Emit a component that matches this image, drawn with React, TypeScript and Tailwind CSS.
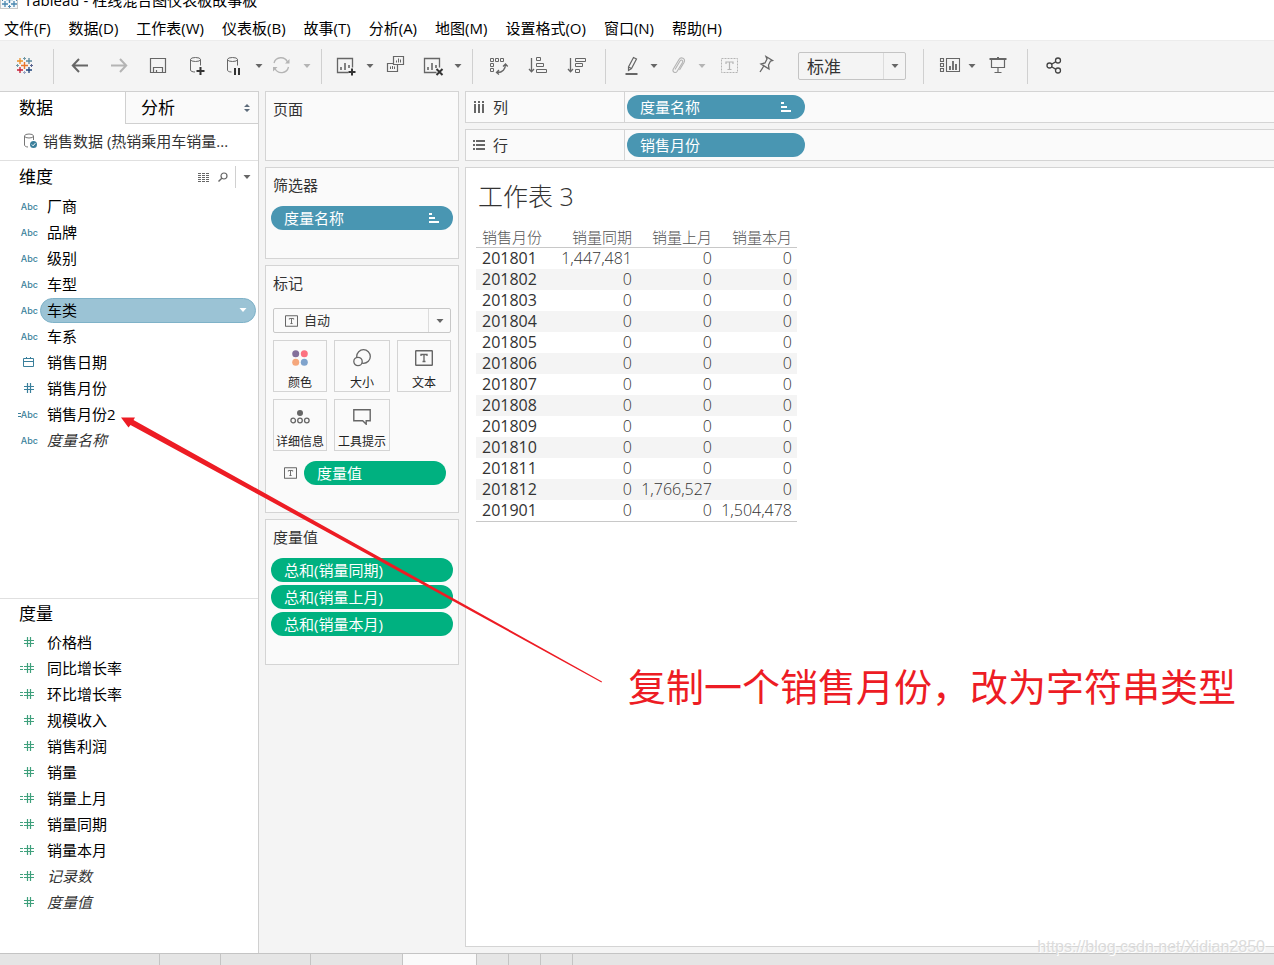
import type { ReactNode } from 'react'
import clsx from 'clsx'

type FieldKind = 'text' | 'calcText' | 'date' | 'number' | 'calcNumber'

type Field = {
  name: string
  kind: FieldKind
  selected?: boolean
  generated?: boolean
}

const MENUS = [
  '文件(F)',
  '数据(D)',
  '工作表(W)',
  '仪表板(B)',
  '故事(T)',
  '分析(A)',
  '地图(M)',
  '设置格式(O)',
  '窗口(N)',
  '帮助(H)',
]

const DIMENSIONS: Field[] = [
  { name: '厂商', kind: 'text' },
  { name: '品牌', kind: 'text' },
  { name: '级别', kind: 'text' },
  { name: '车型', kind: 'text' },
  { name: '车类', kind: 'text', selected: true },
  { name: '车系', kind: 'text' },
  { name: '销售日期', kind: 'date' },
  { name: '销售月份', kind: 'number' },
  { name: '销售月份2', kind: 'calcText' },
  { name: '度量名称', kind: 'text', generated: true },
]

const MEASURES: Field[] = [
  { name: '价格档', kind: 'number' },
  { name: '同比增长率', kind: 'calcNumber' },
  { name: '环比增长率', kind: 'calcNumber' },
  { name: '规模收入', kind: 'number' },
  { name: '销售利润', kind: 'number' },
  { name: '销量', kind: 'number' },
  { name: '销量上月', kind: 'calcNumber' },
  { name: '销量同期', kind: 'calcNumber' },
  { name: '销量本月', kind: 'calcNumber' },
  { name: '记录数', kind: 'calcNumber', generated: true },
  { name: '度量值', kind: 'number', generated: true },
]

const ROWS = [
  ['201801', '1,447,481', '0', '0'],
  ['201802', '0', '0', '0'],
  ['201803', '0', '0', '0'],
  ['201804', '0', '0', '0'],
  ['201805', '0', '0', '0'],
  ['201806', '0', '0', '0'],
  ['201807', '0', '0', '0'],
  ['201808', '0', '0', '0'],
  ['201809', '0', '0', '0'],
  ['201810', '0', '0', '0'],
  ['201811', '0', '0', '0'],
  ['201812', '0', '1,766,527', '0'],
  ['201901', '0', '0', '1,504,478'],
]

/* ---------- icons ---------- */

function Icon({ children, className }: { children: ReactNode; className?: string }) {
  return (
    <svg viewBox="0 0 24 24" fill="none" stroke="currentColor" className={clsx('size-6 shrink-0', className)}>
      {children}
    </svg>
  )
}

function Caret({ className }: { className?: string }) {
  return (
    <svg viewBox="0 0 8 8" fill="currentColor" className={clsx('size-2 shrink-0', className)}>
      <path d="M0.5 2h7L4 6z" />
    </svg>
  )
}

// x, y, arm length, stroke width, colour
const LOGO_MARKS: [number, number, number, number, string][] = [
  [12.5, 11.5, 3.5, 1.4, '#e8762c'],
  [8, 7, 3, 1.3, '#eb9129'],
  [17, 7, 3, 1.3, '#59879b'],
  [8, 16, 3, 1.3, '#c72037'],
  [17, 16, 3, 1.3, '#1f457e'],
  [12.5, 4.5, 1.5, 1, '#7099a6'],
  [12.5, 18.5, 1.5, 1, '#9aa4c4'],
  [5.5, 11.5, 1.5, 1, '#7099a6'],
  [19.5, 11.5, 1.5, 1, '#5b6591'],
]

function LogoIcon({ mono, className }: { mono?: boolean; className?: string }) {
  return (
    <Icon className={className}>
      {LOGO_MARKS.map(([x, y, r, width, color]) => (
        <path
          key={`${x}-${y}`}
          d={`M${x - r} ${y}h${r * 2}M${x} ${y - r}v${r * 2}`}
          stroke={mono ? '#4a86b0' : color}
          strokeWidth={width}
        />
      ))}
    </Icon>
  )
}

const BackIcon = () => (
  <Icon>
    <path d="M20 11.5H5M11 5L4.8 11.5L11 18" strokeWidth="2" />
  </Icon>
)

const ForwardIcon = () => (
  <Icon>
    <path d="M4 11.5h15M13 5l6.2 6.500L13 18" strokeWidth="2" />
  </Icon>
)

const SaveIcon = () => (
  <Icon>
    <path d="M4.500 4.500h15v14h-15zM7.500 18.500v-5h9v5M10.500 18.500v-2.500" strokeWidth="1.200" />
  </Icon>
)

const AddDataIcon = () => (
  <Icon>
    <ellipse cx="10.5" cy="5.5" rx="5" ry="2" />
    <path d="M5.5 5.500v10.500c0 1.200 2 2 4.500 2M15.500 5.500v6" />
    <path d="M11.500 17h8M15.500 13v8" stroke="#333" strokeWidth="2" />
  </Icon>
)

const PauseDataIcon = () => (
  <Icon>
    <ellipse cx="9.5" cy="5.5" rx="5" ry="2" />
    <path d="M4.500 5.500v10.500c0 1.200 1.500 2 4 2M14.500 5.500v6" />
    <path d="M12 14v7M16 14v7" stroke="#333" strokeWidth="2" />
  </Icon>
)

const RefreshIcon = () => (
  <Icon>
    <path d="M5 9a7.2 7.2 0 0 1 13.500-1M19.500 13a7.200 7.200 0 0 1-13.500 1.500" strokeWidth="1.300" />
    <path d="M20.500 5v4.500H16zM4 17.500V13h4.500z" fill="currentColor" stroke="none" />
  </Icon>
)

const NewSheetIcon = () => (
  <Icon>
    <path d="M14.500 18.500h-11v-14h15v9" strokeWidth="1.300" />
    <path d="M7 16v-3M11 16V9M15 14v-3" strokeWidth="1.600" />
    <path d="M14.500 18h7M18 14.500v7" stroke="#333" strokeWidth="2" />
  </Icon>
)

const DuplicateIcon = () => (
  <Icon>
    <path d="M9.500 2.500h10v8h-10zM9.500 9.500h-6v8h10v-7" strokeWidth="1.200" />
    <path d="M12.500 8.500v-2M14.500 8.500v-4M16.500 8.500v-3M6.500 15v-2.500M8.500 15v-3M10.500 15v-2.500" />
  </Icon>
)

const ClearSheetIcon = () => (
  <Icon>
    <path d="M14.500 18.500h-12v-14h15v9" strokeWidth="1.300" />
    <path d="M6 16v-3M10 16V9M14 14v-3" strokeWidth="1.600" />
    <path d="M14.500 15l6 6M20.500 15l-6 6" stroke="#333" strokeWidth="2" />
  </Icon>
)

const SwapIcon = () => (
  <Icon>
    <path d="M3.500 4.500h3v3h-3zM8.500 4.500h3v3h-3zM13.500 4.500h3v3h-3zM3.500 9.500h3v3h-3zM3.500 14.500h3v3h-3z" />
    <path d="M10.500 18.500c5 0 8-3.500 8-8M16 12.500l2.500-2.500 2.200 2.500M12 16l-2.500 2.500 2.500 2" strokeWidth="1.300" />
  </Icon>
)

const SortAscIcon = () => (
  <Icon>
    <path d="M5.500 4v13.500M3 15l2.500 2.700L8 15" strokeWidth="1.300" />
    <path d="M10.500 3.500h4v3h-4zM10.500 9.500h7v3h-7zM10.500 15.500h10v3h-10z" />
  </Icon>
)

const SortDescIcon = () => (
  <Icon>
    <path d="M5.500 4v13.500M3 15l2.500 2.700L8 15" strokeWidth="1.300" />
    <path d="M10.500 4.500h10v3h-10zM10.500 9.500h7v3h-7zM10.500 15.500h4v3h-4z" />
  </Icon>
)

const HighlightIcon = () => (
  <Icon>
    <path d="M13.500 3.500l3 1.500-5 9.500-3 2v-3.500zM8.500 13l3 1.500" strokeWidth="1.200" />
    <path d="M5.500 20h12" strokeWidth="2" />
  </Icon>
)

const ClipIcon = () => (
  <Icon>
    <path
      d="M9 15.500l5-8.500c1.200-2 3.500-.5 2.500 1.500l-5.500 9c-1.500 2.200-5 .3-3.800-2.200L13 5.500c2-3.300 7-1 5 3l-4.500 7.500"
      strokeWidth="1.100"
    />
  </Icon>
)

const LabelIcon = () => (
  <Icon>
    <path d="M3.500 4.500h16v14h-16z" strokeDasharray="2 1" />
    <path d="M8 10V8h7v2M11.500 8v7.500M9.500 15.500h4" strokeWidth="1.200" />
  </Icon>
)

const PinIcon = () => (
  <Icon>
    <path d="M12 2.500l6.500 4-2 .5-2 4 .5 4-8-5 4-1 2-4zM9.500 12.500L6 18" strokeWidth="1.300" />
  </Icon>
)

const ShowMeIcon = () => (
  <Icon>
    <path d="M2.500 4.500h3v3h-3zM2.500 9.500h3v3h-3zM2.500 14.500h3v3h-3zM8.500 4.500h13v13h-13z" strokeWidth="1.100" />
    <path d="M12 16v-4M15 16V7M18 16v-6" strokeWidth="1.800" />
  </Icon>
)

const PresentIcon = () => (
  <Icon>
    <path d="M3.500 5h17M12 3v2" strokeWidth="2" />
    <path d="M5.500 5.500v8h13v-8M12 13.500v5M8.500 18.500h7" strokeWidth="1.200" />
  </Icon>
)

const ShareIcon = () => (
  <Icon>
    <circle cx="7.500" cy="11.500" r="2.500" strokeWidth="1.300" />
    <circle cx="16" cy="6.500" r="2.500" strokeWidth="1.300" />
    <circle cx="16" cy="16.500" r="2.500" strokeWidth="1.300" />
    <path d="M9.500 10.300l4.500-2.700M9.500 12.700l4.500 2.700" strokeWidth="1.300" />
  </Icon>
)

function TextMark({ className }: { className?: string }) {
  return (
    <svg viewBox="0 0 18 16" fill="none" stroke="currentColor" className={clsx('shrink-0 text-[#666]', className)}>
      <rect x="0.7" y="0.7" width="16.6" height="14.6" rx="0.5" strokeWidth="1.400" />
      <path d="M6 6V4.500h6V6M9 4.500v7M7.500 11.500h3" strokeWidth="1.300" />
    </svg>
  )
}

function SortedIcon() {
  return (
    <svg viewBox="0 0 10 10" fill="currentColor" className="size-2.5 shrink-0">
      <path d="M0 0h3v2H0zM0 4h6v2H0zM0 8h10v2H0z" />
    </svg>
  )
}

function FieldIcon({ kind }: { kind: FieldKind }) {
  if (kind === 'text' || kind === 'calcText') {
    return (
      <span className="flex items-center pt-px font-['Inter'] text-[9px] font-medium">
        {kind === 'calcText' && (
          <svg viewBox="0 0 3 4" fill="currentColor" className="h-1 w-[3px]">
            <path d="M0 0h3v1H0zM0 3h3v1H0z" />
          </svg>
        )}
        Abc
      </span>
    )
  }
  if (kind === 'date') {
    return (
      <svg viewBox="0 0 16 12" fill="none" stroke="currentColor" className="h-3 w-4">
        <path d="M2.500 2.500h10v8h-10zM2.500 5.500h10M5.500 1v2M9.500 1v2" />
      </svg>
    )
  }
  return (
    <svg viewBox="0 0 20 12" fill="none" stroke="currentColor" className="h-3 w-5">
      {kind === 'calcNumber' && <path d="M3 4.500h3M3 7.500h3" />}
      <path d="M7 4.500h10M7 7.500h10M10.500 1v10M13.500 1v10" strokeWidth="1.200" />
    </svg>
  )
}

/* ---------- toolbar ---------- */

function ToolButton({ label, className, children }: { label: string; className?: string; children: ReactNode }) {
  return (
    <button aria-label={label} className={clsx('flex h-6 shrink-0 items-center justify-center', className)}>
      {children}
    </button>
  )
}

function DropButton({ label, className }: { label: string; className?: string }) {
  return (
    <button aria-label={label} className={clsx('flex h-6 w-3 shrink-0 items-center justify-center', className)}>
      <Caret className="size-1.5" />
    </button>
  )
}

function Separator({ className }: { className?: string }) {
  return <span className={clsx('h-[35px] w-px shrink-0 bg-[#d0d0d0]', className)} />
}

function Toolbar() {
  return (
    <div className="flex h-[51px] shrink-0 items-center border-t border-[#ececec] bg-[#f4f4f4] pl-3 text-[#666]">
      <ToolButton label="起始页"><LogoIcon /></ToolButton>
      <Separator className="ml-[17px]" />
      <ToolButton label="撤消" className="ml-3.5"><BackIcon /></ToolButton>
      <ToolButton label="重做" className="ml-[15px] text-[#b4b4b4]"><ForwardIcon /></ToolButton>
      <ToolButton label="保存" className="ml-[15px]"><SaveIcon /></ToolButton>
      <ToolButton label="新建数据源" className="ml-[15px]"><AddDataIcon /></ToolButton>
      <ToolButton label="暂停自动更新" className="ml-3.5"><PauseDataIcon /></ToolButton>
      <DropButton label="自动更新选项" className="ml-1.5" />
      <ToolButton label="运行更新" className="ml-1 text-[#b4b4b4]"><RefreshIcon /></ToolButton>
      <DropButton label="更新选项" className="ml-2 text-[#b4b4b4]" />
      <Separator className="ml-2" />
      <ToolButton label="新建工作表" className="ml-3"><NewSheetIcon /></ToolButton>
      <DropButton label="新建选项" className="ml-1.5" />
      <ToolButton label="复制" className="ml-2"><DuplicateIcon /></ToolButton>
      <ToolButton label="清除工作表" className="ml-3.5"><ClearSheetIcon /></ToolButton>
      <DropButton label="清除选项" className="ml-1.5" />
      <Separator className="ml-2" />
      <ToolButton label="交换行和列" className="ml-3.5"><SwapIcon /></ToolButton>
      <ToolButton label="升序排序" className="ml-[15px]"><SortAscIcon /></ToolButton>
      <ToolButton label="降序排序" className="ml-[15px]"><SortDescIcon /></ToolButton>
      <Separator className="ml-4" />
      <ToolButton label="突出显示" className="ml-3.5"><HighlightIcon /></ToolButton>
      <DropButton label="突出显示选项" className="ml-1" />
      <ToolButton label="组成员" className="ml-1.5 text-[#b4b4b4]"><ClipIcon /></ToolButton>
      <DropButton label="组选项" className="ml-1.5 text-[#b4b4b4]" />
      <ToolButton label="显示标记标签" className="ml-2.5 text-[#b4b4b4]"><LabelIcon /></ToolButton>
      <ToolButton label="固定轴" className="ml-3"><PinIcon /></ToolButton>
      <label className="ml-5 grid h-7 w-[108px] shrink-0 grid-cols-[1fr_22px] items-center rounded-xs border border-[#c4c4c4]">
        <select
          aria-label="适合"
          className="col-span-2 col-start-1 row-start-1 h-full appearance-none pl-2 text-[17px] leading-none text-[#333]"
        >
          <option>标准</option>
        </select>
        <span className="pointer-events-none col-start-2 row-start-1 flex h-full items-center justify-center border-l border-[#dcdcdc]">
          <Caret />
        </span>
      </label>
      <Separator className="ml-[17px]" />
      <ToolButton label="显示卡" className="ml-3.5"><ShowMeIcon /></ToolButton>
      <DropButton label="显示卡选项" className="ml-1" />
      <ToolButton label="演示模式" className="ml-2"><PresentIcon /></ToolButton>
      <Separator className="ml-[17px]" />
      <ToolButton label="共享" className="ml-3.5 text-[#444]"><ShareIcon /></ToolButton>
    </div>
  )
}

/* ---------- data pane ---------- */

function FieldList({ fields, className }: { fields: Field[]; className?: string }) {
  return (
    <ul className={className}>
      {fields.map((field) => (
        <li key={field.name}>
          <button className="flex h-[26px] w-full items-center pr-0.5 text-left">
            <span
              className={clsx(
                'flex w-10 shrink-0 justify-end',
                field.kind === 'text' || field.kind === 'calcText' ? 'pr-0.5' : 'pr-[3px]',
              )}
            >
              <FieldIcon kind={field.kind} />
            </span>
            <span
              className={clsx(
                'flex h-[25px] flex-1 items-center justify-between rounded-full border pr-2 pl-1.5 text-[15px]',
                field.selected ? 'border-[#7fb2c8] bg-[#9bc3d5]' : 'border-transparent',
                field.generated ? 'text-[#333] italic' : 'text-black',
              )}
            >
              {field.name}
              {field.selected && <Caret className="text-white" />}
            </span>
          </button>
        </li>
      ))}
    </ul>
  )
}

function DataPane() {
  return (
    <aside className="flex w-[259px] shrink-0 flex-col border-t border-r border-[#d0d0d0] bg-white">
      <div className="flex h-8 shrink-0 text-[17px] text-black">
        <button className="w-[125px] pl-[19px] text-left">数据</button>
        <button className="flex flex-1 items-center justify-between border-b border-l border-[#d0d0d0] bg-[#fafafa] pr-2 pl-[15px]">
          分析
          <svg viewBox="0 0 6 8" fill="#5c6b7a" className="h-2 w-1.5">
            <path d="M3 0l3 3H0zM3 8l3-3H0z" />
          </svg>
        </button>
      </div>
      <button className="flex h-[37px] shrink-0 items-center gap-[5px] border-b border-[#e0e0e0] pb-0.5 pl-[22px] text-[15px] text-[#333]">
        <svg viewBox="0 0 16 18" fill="none" stroke="#777" className="h-[18px] w-4 shrink-0">
          <ellipse cx="7" cy="4" rx="4.5" ry="2" />
          <path d="M2.500 4v9c0 1 1.500 2 3.500 2M11.500 4v4" />
          <circle cx="11.5" cy="12.5" r="3.5" fill="#3a7f9b" stroke="none" />
          <path d="M9.800 12.500l1.300 1.300 2.200-2.600" stroke="white" />
        </svg>
        销售数据 (热销乘用车销量...
      </button>

      <section className="flex flex-1 flex-col">
        <div className="flex h-8 items-center text-[#666]">
          <h2 className="flex-1 pl-[19px] text-[17px] text-black">维度</h2>
          <button aria-label="查看数据">
            <svg viewBox="0 0 12 9" stroke="currentColor" className="h-[9px] w-3">
              <path d="M0 .5h12M0 2.500h12M0 4.500h12M0 6.500h12M0 8.500h12" strokeDasharray="3 1" />
            </svg>
          </button>
          <button aria-label="查找字段" className="ml-2">
            <svg viewBox="0 0 10 10" fill="none" stroke="currentColor" className="size-2.5">
              <circle cx="6" cy="4" r="3" strokeWidth="1.200" />
              <path d="M3.800 6.200L.5 9.500" strokeWidth="1.400" />
            </svg>
          </button>
          <span className="ml-[7px] h-[22px] w-px bg-[#d0d0d0]" />
          <button aria-label="数据窗格选项" className="mr-[7px] ml-[7px]"><Caret /></button>
        </div>
        <FieldList fields={DIMENSIONS} className="text-[#3a7f9b]" />
      </section>

      <section className="border-t border-[#e0e0e0] pb-[38px]">
        <h2 className="h-[30px] pl-[19px] text-[17px] leading-[30px] text-black">度量</h2>
        <FieldList fields={MEASURES} className="text-[#3fa07c]" />
      </section>
    </aside>
  )
}

/* ---------- cards ---------- */

function Pill({
  children,
  sorted,
  green,
  className,
}: {
  children: ReactNode
  sorted?: boolean
  green?: boolean
  className?: string
}) {
  return (
    <button
      className={clsx(
        'flex h-6 items-center justify-between rounded-full pr-3.5 pl-[13px] text-[15px] text-white',
        green ? 'bg-[#00b180]' : 'bg-[#4996b2]',
        className,
      )}
    >
      {children}
      {sorted && <SortedIcon />}
    </button>
  )
}

function Card({ title, className, children }: { title: string; className?: string; children?: ReactNode }) {
  return (
    <section className={clsx('border border-[#d4d4d4] bg-[#fafafa] px-[5px]', className)}>
      <h3 className="mb-1 h-[34px] pl-0.5 text-[15px] leading-[34px] text-[#333]">{title}</h3>
      {children}
    </section>
  )
}

function MarkButton({ label, children }: { label: string; children: ReactNode }) {
  return (
    <button className="flex h-[52px] flex-col items-center justify-between border border-[#d4d4d4] pt-[5px] text-xs leading-4 whitespace-nowrap text-[#222]">
      <span className="flex h-6 items-center text-[#666]">{children}</span>
      {label}
    </button>
  )
}

function MarksCard() {
  return (
    <Card title="标记" className="pb-[27px]">
      <div className="mt-2 px-0.5">
        <label className="grid h-[25px] grid-cols-[30px_1fr_22px] items-center rounded-xs border border-[#c8c8c8]">
          <select
            aria-label="标记类型"
            className="col-span-3 col-start-1 row-start-1 h-full appearance-none pl-[30px] text-[13px] leading-none text-[#333]"
          >
            <option>自动</option>
          </select>
          <span className="pointer-events-none col-start-1 row-start-1 flex justify-center pl-1">
            <TextMark className="h-3 w-[13px]" />
          </span>
          <span className="pointer-events-none col-start-3 row-start-1 flex h-full items-center justify-center border-l border-[#dcdcdc] text-[#666]">
            <Caret />
          </span>
        </label>

        <div className="mt-[7px] grid grid-cols-[54fr_56fr_54fr] gap-[7px]">
          <MarkButton label="颜色">
            <svg viewBox="0 0 16 16" className="size-4">
              <circle cx="3.7" cy="3.7" r="3.5" fill="#84709b" />
              <circle cx="12.3" cy="3.7" r="3.5" fill="#fc7180" />
              <circle cx="3.7" cy="12.3" r="3.5" fill="#f5a77c" />
              <circle cx="12.3" cy="12.3" r="3.5" fill="#7fa3cc" />
            </svg>
          </MarkButton>
          <MarkButton label="大小">
            <svg viewBox="0 0 18 18" fill="#fafafa" stroke="currentColor" className="size-[18px]">
              <circle cx="10.5" cy="7.5" r="6.8" strokeWidth="1.300" />
              <circle cx="5" cy="12.5" r="4.2" strokeWidth="1.300" />
            </svg>
          </MarkButton>
          <MarkButton label="文本">
            <TextMark className="h-4 w-[18px]" />
          </MarkButton>
          <MarkButton label="详细信息">
            <svg viewBox="0 0 20 16" fill="none" stroke="currentColor" className="h-4 w-5">
              <circle cx="10" cy="4" r="3" fill="currentColor" stroke="none" />
              <circle cx="3.2" cy="11.5" r="2.3" strokeWidth="1.300" />
              <circle cx="10" cy="11.5" r="2.3" strokeWidth="1.300" />
              <circle cx="16.8" cy="11.5" r="2.3" strokeWidth="1.300" />
            </svg>
          </MarkButton>
          <MarkButton label="工具提示">
            <svg viewBox="0 0 18 16" fill="none" stroke="currentColor" className="h-4 w-[18px]">
              <path d="M.8 .8h16.400v10.900h-4v3.500l-3.500-3.500H.8z" strokeWidth="1.400" />
            </svg>
          </MarkButton>
        </div>

        <div className="mt-2.5 flex items-center gap-[7px] pr-[5px] pl-[11px]">
          <TextMark className="h-3 w-[13px]" />
          <Pill green className="flex-1">度量值</Pill>
        </div>
      </div>
    </Card>
  )
}

function CardColumn() {
  return (
    <div className="flex w-[194px] shrink-0 flex-col gap-1.5">
      <Card title="页面" className="pb-[30px]" />
      <Card title="筛选器" className="pb-7">
        <Pill sorted className="w-full">度量名称</Pill>
      </Card>
      <MarksCard />
      <Card title="度量值" className="pb-7">
        <div className="flex flex-col gap-[3px]">
          <Pill green>总和(销量同期)</Pill>
          <Pill green>总和(销量上月)</Pill>
          <Pill green>总和(销量本月)</Pill>
        </div>
      </Card>
    </div>
  )
}

/* ---------- worksheet ---------- */

function Shelf({ title, icon, children }: { title: string; icon: ReactNode; children: ReactNode }) {
  return (
    <div className="flex h-8 shrink-0 items-center border border-r-0 border-[#d4d4d4] bg-[#fafafa]">
      <div className="flex h-full w-[159px] items-center gap-2 border-r border-[#d4d4d4] pl-[7px] text-[15px] text-[#333]">
        {icon}
        {title}
      </div>
      <div className="pl-0.5">{children}</div>
    </div>
  )
}

function Worksheet() {
  return (
    <main className="flex min-w-0 flex-1 flex-col gap-1.5">
      <Shelf
        title="列"
        icon={
          <svg viewBox="0 0 12 12" fill="#666" className="size-3">
            <path d="M1 0h2v2H1zM5 0h2v2H5zM9 0h2v2H9zM1 3h2v9H1zM5 3h2v9H5zM9 3h2v9H9z" />
          </svg>
        }
      >
        <Pill sorted className="w-[178px]">度量名称</Pill>
      </Shelf>
      <Shelf
        title="行"
        icon={
          <svg viewBox="0 0 12 12" fill="#666" className="size-3">
            <path d="M0 1h2v2H0zM0 5h2v2H0zM0 9h2v2H0zM3 1h9v2H3zM3 5h9v2H3zM3 9h9v2H3z" />
          </svg>
        }
      >
        <Pill className="w-[178px]">销售月份</Pill>
      </Shelf>

      <div className="flex-1 border border-r-0 border-[#d4d4d4] bg-white pl-2.5">
        <h1 className="h-[59px] pl-0.5 text-[25px] leading-[56px] font-light text-[#333]">工作表 3</h1>
        <table className="w-[321px] table-fixed border-b border-[#c8c8c8] text-[16px] text-[#333]">
          <colgroup>
            <col className="w-[76px]" />
            <col className="w-[85px]" />
            <col className="w-20" />
            <col className="w-20" />
          </colgroup>
          <thead>
            <tr className="h-5 border-b border-[#c8c8c8] text-[15px] leading-[18px] text-[#555]">
              <th className="pl-1.5 text-left font-light whitespace-nowrap">销售月份</th>
              <th className="pr-[5px] text-right font-light whitespace-nowrap">销量同期</th>
              <th className="pr-[5px] text-right font-light whitespace-nowrap">销量上月</th>
              <th className="pr-[5px] text-right font-light whitespace-nowrap">销量本月</th>
            </tr>
          </thead>
          <tbody>
            {ROWS.map(([month, ...values]) => (
              <tr key={month} className="h-[21px] leading-[21px] even:bg-[#f4f4f4]">
                <th className="pl-1.5 text-left font-normal">{month}</th>
                {values.map((value, i) => (
                  <td key={i} className="pr-[5px] text-right font-light">{value}</td>
                ))}
              </tr>
            ))}
          </tbody>
        </table>
      </div>
    </main>
  )
}

/* ---------- page ---------- */

function SheetTabs() {
  return (
    <nav className="flex h-3 shrink-0 border-t border-[#c4c4c4] bg-[#e5e5e5]">
      <button aria-label="数据源" className="w-40 border-r border-[#c4c4c4]" />
      <button aria-label="工作表 1" className="w-[61px] border-r border-[#c4c4c4]" />
      <button aria-label="工作表 2" className="w-[90px] border-r border-[#c4c4c4]" />
      <button aria-label="仪表板 1" className="w-[92px] border-r border-[#c4c4c4]" />
      <button aria-label="工作表 3" className="w-[74px] border-r border-[#c4c4c4] bg-[#fafafa]" />
      <button aria-label="新建工作表" className="w-8 border-r border-[#c4c4c4]" />
      <button aria-label="新建仪表板" className="w-8 border-r border-[#c4c4c4]" />
      <button aria-label="新建故事" className="w-8 border-r border-[#c4c4c4]" />
    </nav>
  )
}

export default function App() {
  return (
    <div className="relative flex h-screen flex-col overflow-hidden bg-[#f4f4f4] font-['Open_Sans','Noto_Sans_CJK_SC',sans-serif]">
      {/* Title bar, scrolled half out of view */}
      <header className="flex h-3 shrink-0 items-end gap-1.5 overflow-hidden bg-white text-[15px] leading-6 text-black">
        <span className="mb-[3px] flex size-[18px] items-center justify-center border border-[#c8c8c8] bg-[#f4f8fa]">
          <LogoIcon mono className="size-4" />
        </span>
        Tableau - 柱线混合图仪表板故事板
      </header>
      <nav className="flex h-7 shrink-0 items-center gap-[18px] bg-white pt-1 pl-1 text-[15px] text-black">
        {MENUS.map((menu) => (
          <button key={menu} className="whitespace-nowrap">{menu}</button>
        ))}
      </nav>
      <Toolbar />

      <div className="flex min-h-0 flex-1 gap-1.5">
        <DataPane />
        <div className="flex min-w-0 flex-1 gap-1.5 pb-1.5">
          <CardColumn />
          <Worksheet />
        </div>
      </div>
      <SheetTabs />

      {/* Callout drawn over the workbook */}
      <svg viewBox="0 0 490 270" className="pointer-events-none absolute top-[415px] left-[118px] h-[270px] w-[490px]">
        <path
          d="M3 2.500L17 2.500L15.500 5L144 76.500L484 266.500L483.500 267.500L144 81.500L12.500 10L10.500 12.500z"
          fill="#ed1c24"
        />
      </svg>
      <p className="absolute top-[658px] left-[628px] text-[38px] leading-[56px] whitespace-nowrap text-[#ed1c24]">
        复制一个销售月份，改为字符串类型
      </p>
      <p className="absolute right-[9px] bottom-1.5 font-['Liberation_Sans',sans-serif] text-base leading-6 text-[#dcdcdc] [text-shadow:1px_1px_0_white]">
        https://blog.csdn.net/Xidian2850
      </p>
    </div>
  )
}
